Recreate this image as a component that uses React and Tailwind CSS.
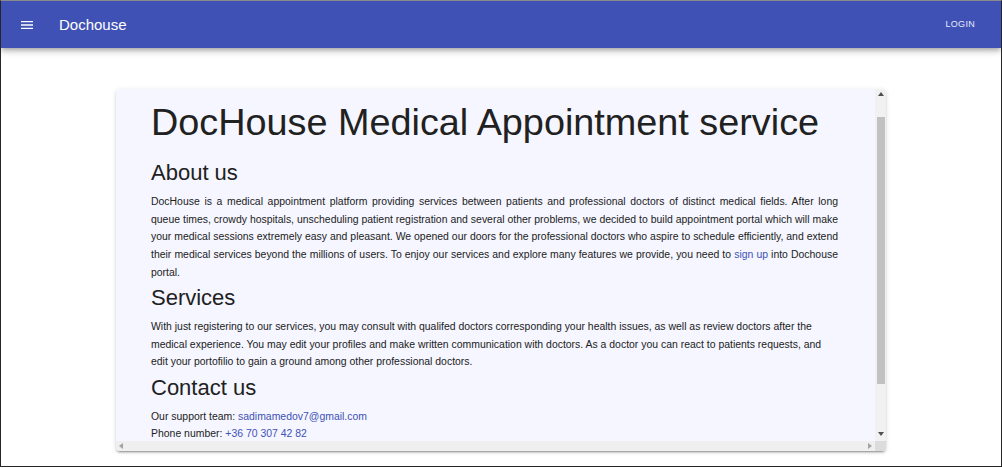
import React from 'react';

function MenuIcon() {
  return (
    <svg width="16" height="16" viewBox="0 0 24 24" fill="currentColor" aria-hidden>
      <path d="M3 18h18v-2H3v2zm0-5h18v-2H3v2zm0-7v2h18V6H3z" />
    </svg>
  );
}

function Arrow({ dir, className }) {
  const points = {
    up: '0,4 3,0 6,4',
    down: '0,0 6,0 3,4',
    left: '4,0 4,6 0,3',
    right: '0,0 0,6 4,3',
  }[dir];
  const vertical = dir === 'up' || dir === 'down';
  return (
    <svg width={vertical ? 6 : 4} height={vertical ? 4 : 6} className={className} aria-hidden>
      <polygon points={points} fill="currentColor" />
    </svg>
  );
}

export default function App() {
  return (
    <div
      className="w-[1002px] h-[467px] border border-[#262626] border-t-[#8a8a8a] bg-white flex flex-col overflow-hidden text-[#222]"
      style={{ fontFamily: '"Liberation Sans", Arial, sans-serif' }}
    >
      <header className="relative z-10 h-[47px] shrink-0 bg-[#3f51b5] text-white flex items-center pl-[18px] pr-[26px] shadow-[0_2px_4px_-1px_rgba(0,0,0,0.2),0_4px_5px_0_rgba(0,0,0,0.14),0_1px_10px_0_rgba(0,0,0,0.12)]">
        <MenuIcon />
        <span className="ml-[24px] text-[15px] leading-none">Dochouse</span>
        <span className="ml-auto text-[9px] font-medium tracking-[0.3px] text-[#e8ebff]">LOGIN</span>
      </header>

      <main className="flex-1 flex justify-center pt-[41px]">
        <div className="w-[770px] h-[362px] rounded-[4px] bg-[#f5f6ff] flex flex-col overflow-hidden shadow-[0_3px_1px_-2px_rgba(0,0,0,0.2),0_2px_2px_0_rgba(0,0,0,0.14),0_1px_5px_0_rgba(0,0,0,0.12)]">
          <div className="flex flex-1 min-h-0">
            <div className="flex-1 overflow-hidden pl-[35px] pr-[37px] pt-[12px]">
              <h1 className="text-[37.8px] leading-[43px] text-[#212121] mb-[16px] whitespace-nowrap">
                DocHouse Medical Appointment service
              </h1>

              <h2 className="text-[22px] leading-[25px] text-[#212121] mb-[8px]">About us</h2>
              <p className="text-[10.45px] leading-[17.7px] mb-[3.5px] text-justify">
                DocHouse is a medical appointment platform providing services between patients and professional
                doctors of distinct medical fields. After long queue times, crowdy hospitals, unscheduling patient
                registration and several other problems, we decided to build appointment portal which will make your
                medical sessions extremely easy and pleasant. We opened our doors for the professional doctors who
                aspire to schedule efficiently, and extend their medical services beyond the millions of users. To
                enjoy our services and explore many features we provide, you need to{' '}
                <a className="text-[#3f51b5]">sign up</a> into Dochouse portal.
              </p>

              <h2 className="text-[22px] leading-[25px] text-[#212121] mb-[8px]">Services</h2>
              <p className="text-[10.45px] leading-[17.7px] mb-[3.5px]">
                With just registering to our services, you may consult with qualifed doctors corresponding your health
                issues, as well as review doctors after the medical experience. You may edit your profiles and make
                written communication with doctors. As a doctor you can react to patients requests, and edit your
                portofilio to gain a ground among other professional doctors.
              </p>

              <h2 className="text-[22px] leading-[25px] text-[#212121] mb-[8px]">Contact us</h2>
              <p className="text-[10.45px] leading-[17.5px]">
                Our support team: <a className="text-[#3f51b5]">sadimamedov7@gmail.com</a>
              </p>
              <p className="text-[10.45px] leading-[17.5px]">
                Phone number: <a className="text-[#3f51b5]">+36 70 307 42 82</a>
              </p>
            </div>

            <div className="w-[11px] shrink-0 bg-[#f1f1f1] flex flex-col items-center">
              <div className="h-[28px] flex justify-center pt-[3px]">
                <Arrow dir="up" className="text-[#505050]" />
              </div>
              <div className="h-[267px] w-[8px] bg-[#c1c1c1]" />
              <div className="flex-1 flex items-end pb-[5px]">
                <Arrow dir="down" className="text-[#505050]" />
              </div>
            </div>
          </div>

          <div className="h-[10px] shrink-0 flex">
            <div className="flex-1 bg-[#efefef] flex items-center justify-between px-[3px]">
              <Arrow dir="left" className="text-[#a3a3a3]" />
              <Arrow dir="right" className="text-[#a3a3a3]" />
            </div>
            <div className="w-[11px] bg-[#dcdcdc]" />
          </div>
        </div>
      </main>
    </div>
  );
}
